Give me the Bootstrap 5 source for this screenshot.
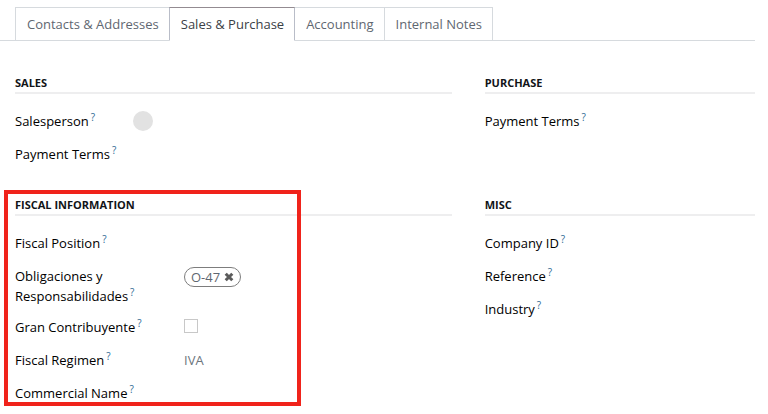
<!DOCTYPE html>
<html lang="en">
<head>
<meta charset="utf-8">
<meta name="viewport" content="width=device-width, initial-scale=1">
<title>Sales &amp; Purchase</title>
<link href="https://cdn.jsdelivr.net/npm/bootstrap@5.3.0/dist/css/bootstrap.min.css" rel="stylesheet">
<style>
body { font-family: "Open Sans", sans-serif; font-size: 13px; line-height: 20px; color: #000; background: #fff; }
.sheet { padding: 7px 13px 0 0; }
.sheet .nav-tabs { --bs-nav-tabs-border-color: #d6dade; padding-left: 15px; }
.sheet .nav-link { border-radius: 0; border: 1px solid #d6dade; color: #5f6771; padding: 6px 10px 6px 11px; line-height: 20px; margin-right: -1px; }
.sheet .nav-link:hover { border-color: #d6dade; }
.sheet .nav-link.active { color: #3b4046; border-color: #938b91 #b9bdc8 #fff; position: relative; }
.groups { display: grid; grid-template-columns: 21fr 13fr; column-gap: 33px; row-gap: 19px; padding: 33px 0 0 15px; }
.group-title { font-size: 11px; line-height: 18px; font-weight: 700; text-transform: uppercase; border-bottom: 2px solid #eeeeef; margin: 0 0 17px; color: #111418; }
.field { display: flex; align-items: flex-start; min-height: 33px; padding-bottom: 11px; font-weight: 500; }
.field-name { flex: 0 0 118px; }
.fiscal .field-name { flex-basis: 169px; }
.fiscal .field-name.two-line { padding-right: 40px; }
.hint { color: #2f6b94; font-size: 10px; font-weight: 400; top: 0; vertical-align: 5px; line-height: 1; margin-left: 2px; }
.avatar { width: 20px; height: 20px; background: #e2e2e2; }
.tag { border: 1px solid #7d7d7d; height: 20px; padding: 0 6px; margin-top: 1px; color: #5f6771; font-weight: 400; line-height: 18px; }
.tag button { color: #5b5b5b; line-height: 0; }
.tick { appearance: none; width: 14px; height: 14px; border: 1px solid #c8c8c8; margin: 2px 0 0; background: #fff; }
.tick:checked { background: #71639e; }
.outline-box { position: absolute; left: -11px; top: -6px; bottom: 10px; width: 297px; border: 4px solid #f0231b; pointer-events: none; }
</style>
</head>
<body>
<main class="sheet">
  <ul class="nav nav-tabs">
    <li class="nav-item"><a class="nav-link" href="#contacts">Contacts &amp; Addresses</a></li>
    <li class="nav-item"><a class="nav-link active" aria-current="page" href="#sales">Sales &amp; Purchase</a></li>
    <li class="nav-item"><a class="nav-link" href="#accounting">Accounting</a></li>
    <li class="nav-item"><a class="nav-link" href="#notes">Internal Notes</a></li>
  </ul>
  <div class="groups">
    <section>
      <h2 class="group-title">Sales</h2>
      <div class="field"><span class="field-name">Salesperson<sup class="hint">?</sup></span><span class="avatar rounded-circle"></span></div>
      <div class="field"><span class="field-name">Payment Terms<sup class="hint">?</sup></span></div>
    </section>
    <section>
      <h2 class="group-title">Purchase</h2>
      <div class="field"><span class="field-name">Payment Terms<sup class="hint">?</sup></span></div>
    </section>
    <section class="fiscal position-relative">
      <h2 class="group-title">Fiscal Information</h2>
      <div class="field"><span class="field-name">Fiscal Position<sup class="hint">?</sup></span></div>
      <div class="field">
        <span class="field-name two-line">Obligaciones y Responsabilidades<sup class="hint">?</sup></span>
        <span class="tag rounded-pill d-inline-flex align-items-center gap-1">O-47
          <button type="button" class="btn p-0 border-0" aria-label="Remove O-47"><svg width="10" height="10" viewBox="0 0 10 10"><path d="M1.7 1.7L8.3 8.3M8.3 1.7L1.7 8.3" stroke="currentColor" stroke-width="3"/></svg></button>
        </span>
      </div>
      <div class="field"><label class="field-name" for="gran">Gran Contribuyente<sup class="hint">?</sup></label><input class="tick" type="checkbox" id="gran"></div>
      <div class="field"><span class="field-name">Fiscal Regimen<sup class="hint">?</sup></span><span class="fw-normal text-secondary">IVA</span></div>
      <div class="field"><span class="field-name">Commercial Name<sup class="hint">?</sup></span></div>
      <div class="outline-box"></div>
    </section>
    <section>
      <h2 class="group-title">Misc</h2>
      <div class="field"><span class="field-name">Company ID<sup class="hint">?</sup></span></div>
      <div class="field"><span class="field-name">Reference<sup class="hint">?</sup></span></div>
      <div class="field"><span class="field-name">Industry<sup class="hint">?</sup></span></div>
    </section>
  </div>
</main>
<script src="https://cdn.jsdelivr.net/npm/bootstrap@5.3.0/dist/js/bootstrap.bundle.min.js"></script>
</body>
</html>
